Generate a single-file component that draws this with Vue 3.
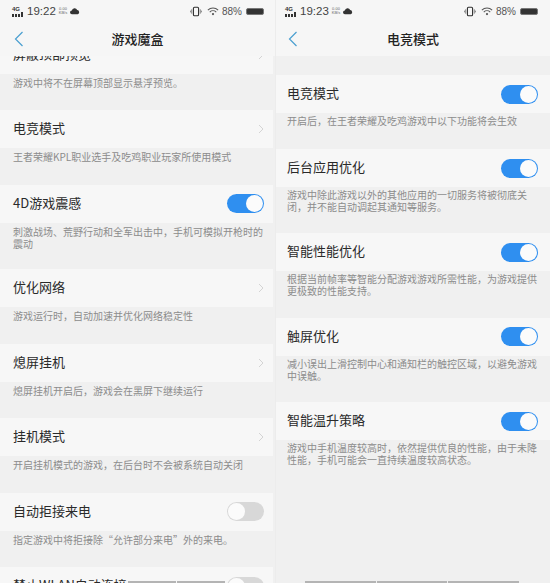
<script setup>
const left = [
  { t: '屏蔽顶部预览', d: '游戏中将不在屏幕顶部显示悬浮预览。', k: 'arrow', clip: true },
  { t: '电竞模式', d: '王者荣耀KPL职业选手及吃鸡职业玩家所使用模式', k: 'arrow' },
  { t: '4D游戏震感', d: '刺激战场、荒野行动和全军出击中，手机可模拟开枪时的震动', k: 'on' },
  { t: '优化网络', d: '游戏运行时，自动加速并优化网络稳定性', k: 'arrow' },
  { t: '熄屏挂机', d: '熄屏挂机开启后，游戏会在黑屏下继续运行', k: 'arrow' },
  { t: '挂机模式', d: '开启挂机模式的游戏，在后台时不会被系统自动关闭', k: 'arrow' },
  { t: '自动拒接来电', d: '指定游戏中将拒接除“允许部分来电”外的来电。', k: 'off' },
  { t: '禁止WLAN自动连接', d: '', k: 'off' }
]
const right = [
  { t: '电竞模式', d: '开启后，在王者荣耀及吃鸡游戏中以下功能将会生效', k: 'on' },
  { t: '后台应用优化', d: '游戏中除此游戏以外的其他应用的一切服务将被彻底关闭，并不能自动调起其通知等服务。', k: 'on' },
  { t: '智能性能优化', d: '根据当前帧率等智能分配游戏游戏所需性能，为游戏提供更极致的性能支持。', k: 'on' },
  { t: '触屏优化', d: '减小误出上滑控制中心和通知栏的触控区域，以避免游戏中误触。', k: 'on' },
  { t: '智能温升策略', d: '游戏中手机温度较高时，依然提供优良的性能，由于未降性能，手机可能会一直持续温度较高状态。', k: 'on' }
]
const phones = [
  { title: '游戏魔盒', time: '19:22', rows: left, cls: 'left' },
  { title: '电竞模式', time: '19:23', rows: right, cls: 'right' }
]
</script>

<template>
  <div class="page">
    <section v-for="p in phones" :key="p.title" class="phone" :class="p.cls">
      <header class="top">
        <div class="status">
          <div class="st-left">
            <span class="net">4G<i class="bars"><b></b><b></b><b></b><b></b></i></span>
            <span class="time">{{ p.time }}</span>
            <span class="kb">0.00<br />KB/s</span>
            <svg class="cloud" viewBox="0 0 12 9" width="10" height="8"><path d="M2.5 8.5a2.3 2.3 0 0 1-.3-4.6A3.4 3.4 0 0 1 8.600 3.300 2.700 2.700 0 0 1 9.300 8.500z" fill="#333" /></svg>
          </div>
          <div class="st-right">
            <svg viewBox="0 0 14 12" width="12" height="11" class="vib"><rect x="4" y="1" width="6" height="10" rx="1.200" fill="none" stroke="#333" stroke-width="1.300" /><path d="M2 3.500v5M12 3.500v5M0.500 5v2M13.500 5v2" stroke="#666" stroke-width="0.900" /></svg>
            <svg viewBox="0 0 14 10" width="12" height="9" class="wifi"><path d="M1 3.500a8.500 8.500 0 0 1 12 0M3.200 5.600a5.400 5.400 0 0 1 7.600 0" fill="none" stroke="#555" stroke-width="1.200" /><circle cx="7" cy="8" r="1.300" fill="#555" /></svg>
            <span class="pct">88%</span>
            <span class="batt"><i></i></span>
          </div>
        </div>
        <div class="nav">
          <svg class="back" viewBox="0 0 10 16" width="10" height="16"><path d="M8.500 1 1.500 8l7 7" fill="none" stroke="#4a9fd0" stroke-width="1.200" /></svg>
          <h1>{{ p.title }}</h1>
        </div>
      </header>
      <div class="list">
        <article v-for="r in p.rows" :key="r.t" class="item">
          <div class="row">
            <span class="name">{{ r.t }}</span>
            <svg v-if="r.k === 'arrow'" class="arrow" viewBox="0 0 6 10" width="6" height="10"><path d="M1 1l4 4-4 4" fill="none" stroke="#d4d4d4" stroke-width="1" /></svg>
            <span v-else class="switch" :class="r.k"><i></i></span>
          </div>
          <p v-if="r.d" class="desc">{{ r.d }}</p>
        </article>
      </div>
      <div class="homebar"><i></i><i></i><i v-if="p.cls === 'right'"></i></div>
    </section>
  </div>
</template>

<style>
html, body { margin: 0; background: #f0f0f0; }
</style>
<style scoped>
.page { display: flex; width: 550px; height: 583px; overflow: hidden; font-family: "Noto Sans CJK SC", "Liberation Sans", sans-serif; }
.phone { position: relative; width: 275px; height: 583px; overflow: hidden; background: #f0f0f0; display: flex; flex-direction: column; }
.phone.right { border-left: 1px solid #ececec; box-sizing: border-box; }
.top { position: relative; z-index: 2; flex: none; height: 56px; background: #f6f6f6; }
.status { height: 22px; display: flex; justify-content: space-between; align-items: center; padding: 0 11px 0 12px; color: #333; }
.right .status { padding-left: 9px; padding-right: 12px; }
.st-left, .st-right { display: flex; align-items: center; gap: 3px; }
.net { font: 700 6px/6px "Liberation Sans", sans-serif; position: relative; width: 12px; height: 11px; }
.bars { position: absolute; left: 0; bottom: 0; display: flex; gap: 1px; align-items: flex-end; }
.bars b { width: 2px; height: 3px; background: #333; }
.bars b:last-child { height: 5px; }
.time { font: 11.500px "Liberation Sans", sans-serif; color: #444; }
.kb { font: 4px/4.500px "Liberation Sans", sans-serif; color: #666; text-align: center; }
.st-right { gap: 3px; }
.vib { margin-right: 2px; }
.pct { font: 10px "Liberation Sans", sans-serif; color: #555; }
.batt { width: 18px; height: 7px; background: #333; border: 1px solid #777; border-radius: 2px; box-sizing: border-box; margin-left: 1px; }
.nav { position: relative; height: 34px; top: -1px; display: flex; align-items: center; justify-content: center; }
.nav h1 { margin: 0; font-size: 13px; font-weight: 500; color: #222; }
.back { position: absolute; left: 14px; top: 10px; }
.right .back { left: 12px; }
.list { flex: 1; overflow: hidden; }
.left .list { margin-top: -20.5px; padding-right: 2px; }
.right .list { padding-top: 19px; }
.row { height: 38px; padding: 0 9px 0 13px; background: #f7f7f7; display: flex; align-items: center; justify-content: space-between; }
.right .row { padding: 0 12px 0 11px; }
.name { font-size: 13px; line-height: 18px; color: #2a2a2a; position: relative; top: -1px; }
.desc { margin: 0; padding: 3px 9px 19.500px 13px; min-height: 36.500px; box-sizing: border-box; font-size: 10px; line-height: 12px; color: #8c8c8c; }
.right .desc { padding: 2px 12px 20.400px 11px; min-height: 36px; }
.switch { width: 37px; height: 19px; border-radius: 10px; display: block; position: relative; }
.switch.on { background: #2f8ff0; }
.switch.off { background: #d8d8d8; }
.switch i { position: absolute; top: 1px; width: 17px; height: 17px; border-radius: 50%; background: #fbfbfb; }
.switch.on i { right: 1px; }
.switch.off i { left: 1px; }
.homebar { position: absolute; z-index: 3; left: 128px; width: 97px; bottom: 0; height: 2px; display: flex; gap: 1px; }
.right .homebar { left: 29px; width: 214px; }
.homebar i { flex: 1; background: #b4b4b4; }
</style>
